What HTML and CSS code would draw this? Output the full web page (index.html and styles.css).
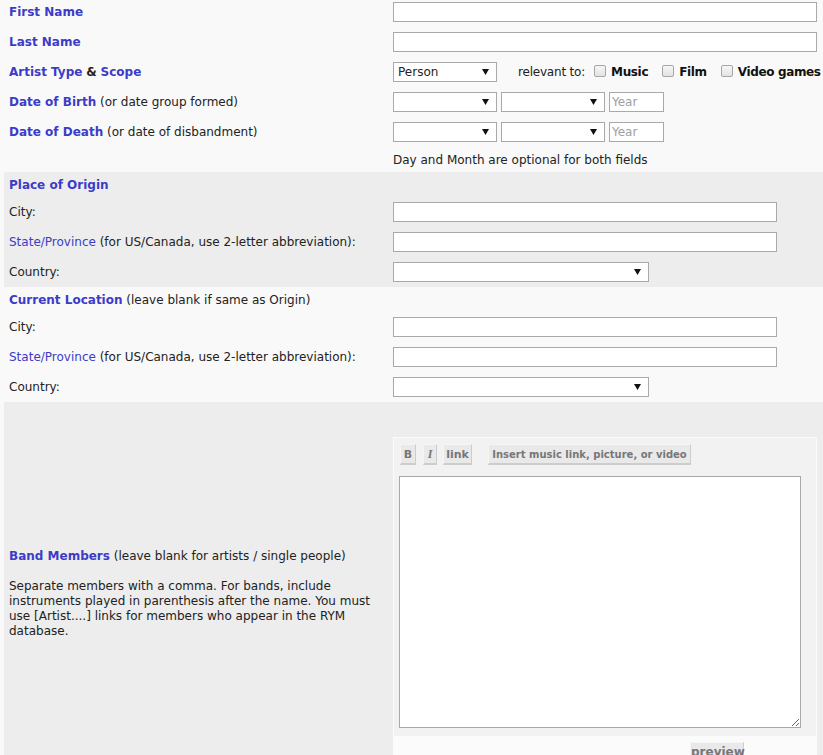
FILE: index.html
```html
<!DOCTYPE html>
<html>
<head>
<meta charset="utf-8">
<title>Artist</title>
<link rel="stylesheet" href="styles.css">
</head>
<body>
<div class="form">
  <div class="section">
    <div class="row">
      <div class="lbl"><b class="key">First Name</b></div>
      <div class="fld"><input class="txt w-name" type="text"></div>
    </div>
    <div class="row">
      <div class="lbl"><b class="key">Last Name</b></div>
      <div class="fld"><input class="txt w-name" type="text"></div>
    </div>
    <div class="row">
      <div class="lbl"><b class="key">Artist Type</b> <b>&amp;</b> <b class="key">Scope</b></div>
      <div class="fld">
        <select class="sel w-small"><option>Person</option></select>
        <span class="rel">relevant to:</span>
        <label class="chk first"><input type="checkbox"><b>Music</b></label>
        <label class="chk"><input type="checkbox"><b>Film</b></label>
        <label class="chk"><input type="checkbox"><b>Video games</b></label>
      </div>
    </div>
    <div class="row">
      <div class="lbl"><b class="key">Date of Birth</b> (or date group formed)</div>
      <div class="fld">
        <select class="sel w-small"><option></option></select>
        <select class="sel w-small"><option></option></select>
        <input class="txt w-year" type="text" placeholder="Year">
      </div>
    </div>
    <div class="row">
      <div class="lbl"><b class="key">Date of Death</b> (or date of disbandment)</div>
      <div class="fld">
        <select class="sel w-small"><option></option></select>
        <select class="sel w-small"><option></option></select>
        <input class="txt w-year" type="text" placeholder="Year">
      </div>
    </div>
    <div class="row note">
      <div class="lbl"></div>
      <div class="fld">Day and Month are optional for both fields</div>
    </div>
  </div>

  <div class="section gray">
    <div class="head"><b class="key">Place of Origin</b></div>
    <div class="row">
      <div class="lbl">City:</div>
      <div class="fld"><input class="txt w-city" type="text"></div>
    </div>
    <div class="row">
      <div class="lbl"><span class="key">State/Province</span> (for US/Canada, use 2-letter abbreviation):</div>
      <div class="fld"><input class="txt w-city" type="text"></div>
    </div>
    <div class="row last">
      <div class="lbl">Country:</div>
      <div class="fld"><select class="sel w-country"><option></option></select></div>
    </div>
  </div>

  <div class="section">
    <div class="head"><b class="key">Current Location</b> (leave blank if same as Origin)</div>
    <div class="row">
      <div class="lbl">City:</div>
      <div class="fld"><input class="txt w-city" type="text"></div>
    </div>
    <div class="row">
      <div class="lbl"><span class="key">State/Province</span> (for US/Canada, use 2-letter abbreviation):</div>
      <div class="fld"><input class="txt w-city" type="text"></div>
    </div>
    <div class="row last">
      <div class="lbl">Country:</div>
      <div class="fld"><select class="sel w-country"><option></option></select></div>
    </div>
  </div>

  <div class="band gray">
    <div class="band-lbl">
      <b class="key">Band Members</b> (leave blank for artists / single people)<br><br>
      Separate members with a comma. For bands, include instruments played in parenthesis after the name. You must use [Artist....] links for members who appear in the RYM database.
    </div>
    <div class="band-fld">
      <div class="editor">
        <div class="editor-inner">
          <div class="toolbar">
            <button class="tb tb-b" type="button">B</button>
            <button class="tb tb-i" type="button">I</button>
            <button class="tb tb-link" type="button">link</button>
            <button class="tb tb-ins" type="button">Insert music link, picture, or video</button>
          </div>
          <textarea class="area"></textarea>
        </div>
        <div class="editor-foot">
          <button class="tb tb-prev" type="button">preview</button>
        </div>
      </div>
    </div>
  </div>
</div>
</body>
</html>
```

FILE: styles.css
```css
html, body {
  margin: 0;
  padding: 0;
  background: #f9f9f9;
}

body {
  font-family: Verdana, "DejaVu Sans", sans-serif;
  font-size: 12px;
  line-height: 15px;
  color: #222;
}

.form {
  margin-left: 4px;
}

.gray {
  background: #ededed;
}

.key {
  color: #3c3cc8;
}

.row {
  display: grid;
  grid-template-columns: 389px 1fr;
  height: 30px;
}

.row.last {
  height: 27px;
}

.row.note {
  height: 22px;
}

.lbl {
  padding: 5px 0 0 5px;
  white-space: nowrap;
}

.fld {
  padding-top: 2px;
  display: flex;
  align-items: center;
  height: 20px;
  gap: 4px;
}

.row.note .fld {
  align-items: flex-start;
  padding-top: 3px;
}

.head {
  height: 22px;
  padding: 6px 0 0 5px;
}

.txt,
.sel {
  box-sizing: border-box;
  height: 20px;
  margin: 0;
  border: 1px solid #a9a9a9;
  background-color: #fff;
  font-family: "DejaVu Sans", sans-serif;
  font-size: 12px;
  color: #222;
  border-radius: 0;
  outline: none;
}

.txt {
  padding: 0 2px;
}

.txt::placeholder {
  color: #a0a0a0;
}

.sel {
  -webkit-appearance: none;
  appearance: none;
  padding: 0 18px 0 4px;
  background-image: url("data:image/svg+xml,%3Csvg xmlns='http://www.w3.org/2000/svg' width='7' height='6'%3E%3Cpolygon points='0,0 7,0 3.5,6' fill='%23111'/%3E%3C/svg%3E");
  background-repeat: no-repeat;
  background-position: right 7px center;
}

.w-name { width: 424px; }
.w-small { width: 104px; }
.w-year { width: 55px; }
.w-city { width: 384px; }
.w-country { width: 256px; }

.rel {
  margin-left: 17px;
  white-space: nowrap;
  letter-spacing: -0.2px;
}

.chk {
  display: flex;
  align-items: center;
  white-space: nowrap;
  margin-left: 10px;
}

.chk.first {
  margin-left: 5px;
}

.chk input {
  -webkit-appearance: none;
  appearance: none;
  width: 12px;
  height: 12px;
  margin: 0 5px 3px 0;
  border: 1px solid #a6a6a6;
  border-radius: 2px;
  background: linear-gradient(#f6f6f6, #e3e3e3);
}

.chk b {
  color: #111;
  letter-spacing: -0.35px;
}

.band {
  display: grid;
  grid-template-columns: 389px 1fr;
  align-items: center;
}

.band-lbl {
  padding: 0 10px 0 5px;
}

.band-fld {
  padding: 35px 0 0 0;
}

.editor {
  width: 424px;
  box-sizing: border-box;
  background: #fbfbfb;
  padding: 1px;
}

.editor-inner {
  background: #f2f2f2;
  padding: 6px 0 8px 5px;
}

.toolbar {
  display: flex;
  align-items: flex-start;
  margin-left: 1px;
  margin-bottom: 11px;
}

.tb {
  box-sizing: border-box;
  height: 21px;
  margin: 0;
  padding: 0;
  border: 0;
  border-top: 1px solid #f5f5f5;
  border-left: 1px solid #f5f5f5;
  border-right: 1px solid #cdcdcd;
  border-bottom: 2px solid #cdcdcd;
  background: #e9e9e9;
  color: #777;
  font-family: "DejaVu Sans", sans-serif;
  font-size: 11px;
  font-weight: bold;
  text-align: center;
  line-height: 17px;
  white-space: nowrap;
}

.tb-b { width: 16px; margin-right: 7px; }
.tb-i {
  width: 14px;
  margin-right: 6px;
  font-family: "Liberation Serif", serif;
  font-style: italic;
  font-size: 12px;
}
.tb-link { width: 29px; margin-right: 16px; }
.tb-ins { width: 203px; font-size: 10px; }

.area {
  display: block;
  box-sizing: border-box;
  width: 402px;
  height: 252px;
  margin: 0;
  border: 1px solid #a9a9a9;
  background: #fff;
}

.editor-foot {
  padding: 6px 0 20px 296px;
}

.tb-prev {
  width: 54px;
  height: 22px;
  font-size: 12px;
}
```
